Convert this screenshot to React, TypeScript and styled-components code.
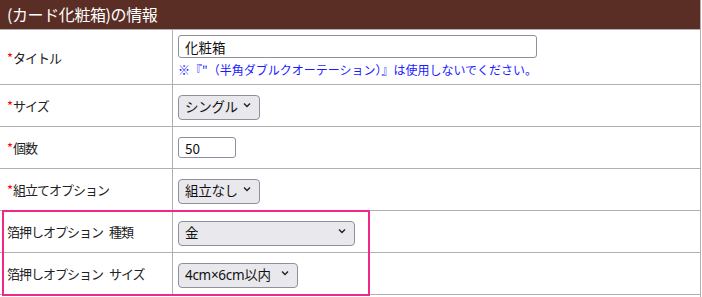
import React from 'react'
import styled, { createGlobalStyle } from 'styled-components'

const GlobalStyle = createGlobalStyle`
	body {
		margin: 0;
		background: #fff;
		font-family: 'Noto Sans CJK JP', 'Noto Sans', sans-serif;
		color: #222;
	}
`

const Panel = styled.div`
	width: 701px;
	box-sizing: border-box;
	border-right: 1px solid #b0b0b0;
`

const PanelTitle = styled.h2`
	margin: 0;
	height: 29px;
	padding-left: 7px;
	background: #5a2e25;
	color: #fff;
	font-size: 16px;
	font-weight: normal;
	line-height: 29px;
	letter-spacing: -0.4px;
`

const Rows = styled.div`
	border-top: 1px solid #b0b0b0;
`

const Highlight = styled.div`
	position: relative;
	&::after {
		content: '';
		position: absolute;
		top: -1px;
		left: 2px;
		width: 368px;
		height: 86px;
		box-sizing: border-box;
		border: 2px solid #f0288c;
		pointer-events: none;
	}
`

const Row = styled.div<{ $height: number }>`
	display: grid;
	grid-template-columns: 173px 1fr;
	box-sizing: border-box;
	height: ${(p) => p.$height}px;
	border-bottom: 1px solid #b0b0b0;
`

const Label = styled.div`
	display: flex;
	align-items: center;
	padding-left: 7px;
	border-right: 1px solid #b0b0b0;
	font-size: 13px;
	letter-spacing: -1px;
	word-spacing: 4px;
	white-space: pre;
	color: #222;
`

const Required = styled.span`
	color: #ff0000;
	margin-right: 1px;
`

const Value = styled.div<{ $top?: boolean }>`
	display: flex;
	flex-direction: column;
	justify-content: ${(p) => (p.$top ? 'flex-start' : 'center')};
	align-items: flex-start;
	padding: ${(p) => (p.$top ? '5px' : '0')} 0 0 5px;
`

const TextInput = styled.input<{ $width: number; $height: number }>`
	width: ${(p) => p.$width}px;
	height: ${(p) => p.$height}px;
	box-sizing: border-box;
	margin: 0;
	padding: 0 6px;
	border: 1px solid #8f8f9d;
	border-radius: 3px;
	font-family: 'Noto Sans CJK JP', 'Noto Sans', sans-serif;
	font-size: 13.5px;
	color: #111;
	background: #fff;
	outline: none;
`

const Note = styled.p`
	margin: 3px 0 0;
	font-size: 12px;
	letter-spacing: 0;
	color: #1a1aff;
`

const SelectBox = styled.div<{ $width: number }>`
	position: relative;
	width: ${(p) => p.$width}px;
	height: 25px;
`

const Select = styled.select`
	appearance: none;
	width: 100%;
	height: 100%;
	box-sizing: border-box;
	margin: 0;
	padding: 0 20px 0 6px;
	border: 1px solid #8f8f9d;
	border-radius: 4px;
	background: #e9e9ed;
	font-family: 'Noto Sans', 'Noto Sans CJK JP', sans-serif;
	font-size: 13.5px;
	letter-spacing: -0.3px;
	color: #111;
	outline: none;
`

const Chevron = styled.svg`
	position: absolute;
	right: 9px;
	top: 9px;
	width: 8px;
	height: 6px;
	pointer-events: none;
`

type SelectFieldProps = {
	width: number
	value: string
	options: string[]
}

const SelectField = ({ width, value, options }: SelectFieldProps) => (
	<SelectBox $width={width}>
		<Select value={value} onChange={() => {}}>
			{options.map((o) => (
				<option key={o} value={o}>
					{o}
				</option>
			))}
		</Select>
		<Chevron viewBox="0 0 8 6">
			<path d="M1 1.5 L4 4.5 L7 1.5" fill="none" stroke="#222" strokeWidth="1.4" />
		</Chevron>
	</SelectBox>
)

const App = () => {
	return (
		<>
			<GlobalStyle />
			<Panel>
				<PanelTitle>(カード化粧箱)の情報</PanelTitle>
				<Rows>
					<Row $height={55}>
						<Label>
							<Required>*</Required>タイトル
						</Label>
						<Value $top>
							<TextInput $width={359} $height={23} defaultValue="化粧箱" />
							<Note>※『"（半角ダブルクオーテーション）』は使用しないでください。</Note>
						</Value>
					</Row>
					<Row $height={42}>
						<Label>
							<Required>*</Required>サイズ
						</Label>
						<Value>
							<SelectField width={82} value="シングル" options={['シングル', 'ダブル']} />
						</Value>
					</Row>
					<Row $height={42}>
						<Label>
							<Required>*</Required>個数
						</Label>
						<Value>
							<TextInput $width={58} $height={21} defaultValue="50" />
						</Value>
					</Row>
					<Row $height={42}>
						<Label>
							<Required>*</Required>組立てオプション
						</Label>
						<Value>
							<SelectField width={82} value="組立なし" options={['組立なし', '組立あり']} />
						</Value>
					</Row>
					<Highlight>
						<Row $height={42}>
							<Label>箔押しオプション 種類</Label>
							<Value>
								<SelectField width={177} value="金" options={['金', '銀']} />
							</Value>
						</Row>
						<Row $height={42}>
							<Label>箔押しオプション サイズ</Label>
							<Value>
								<SelectField
									width={120}
									value="4cm×6cm以内"
									options={['4cm×6cm以内', '6cm×9cm以内']}
								/>
							</Value>
						</Row>
					</Highlight>
					<Row $height={42} />
				</Rows>
			</Panel>
		</>
	)
}

export default App
